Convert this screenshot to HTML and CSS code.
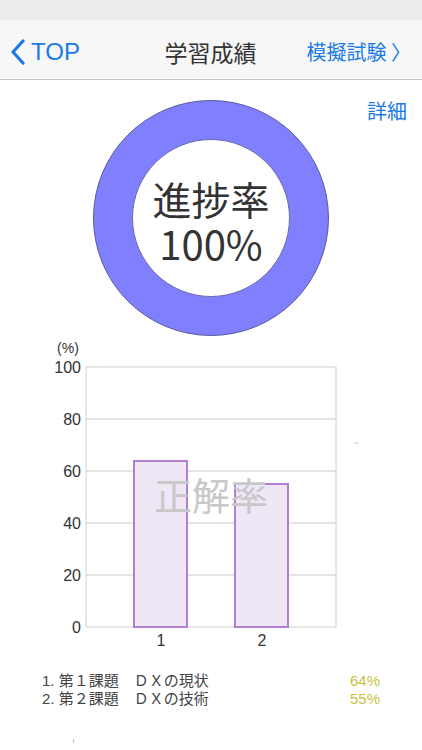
FILE: index.html
```html
<!DOCTYPE html>
<html lang="ja">
<head>
    <meta charset="UTF-8">
    <meta name="viewport" content="width=device-width, initial-scale=1.0">
    <title>学習成績</title>
    <link rel="stylesheet" href="styles.css">
</head>
<body>
    <div class="status-bar"></div>
    <header class="navbar">
        <a class="nav-back">
            <svg class="chevron" width="16" height="26" viewBox="0 0 16 26">
                <path d="M13 2 L3 13 L13 24" fill="none" stroke="currentColor" stroke-width="3.2" stroke-linecap="round" stroke-linejoin="round"/>
            </svg>
            <span>TOP</span>
        </a>
        <h1 class="nav-title">学習成績</h1>
        <a class="nav-next">模擬試験 〉</a>
    </header>

    <section class="progress">
        <div class="donut">
            <div class="donut-hole">
                <div class="donut-label">進捗率</div>
                <div class="donut-value">100%</div>
            </div>
        </div>
        <a class="detail-link">詳細</a>
    </section>

    <section class="chart">
        <svg width="422" height="318" viewBox="0 0 422 318">
            <text class="axis-unit" x="68" y="14" text-anchor="middle">(%)</text>
            <rect x="86" y="28" width="250" height="260" fill="#fff" stroke="#cfcfcf" stroke-width="1"/>
            <g stroke="#c9c9c9" stroke-width="1">
                <line x1="86" y1="80" x2="336" y2="80"/>
                <line x1="86" y1="132" x2="336" y2="132"/>
                <line x1="86" y1="184" x2="336" y2="184"/>
                <line x1="86" y1="236" x2="336" y2="236"/>
            </g>
            <g class="axis-label" text-anchor="end">
                <text x="81" y="34">100</text>
                <text x="81" y="86">80</text>
                <text x="81" y="138">60</text>
                <text x="81" y="190">40</text>
                <text x="81" y="242">20</text>
                <text x="81" y="294">0</text>
            </g>
            <!-- bars: 64%, 55% -->
            <rect x="134" y="122" width="53" height="166" fill="#efe6f6" stroke="#b07fd2" stroke-width="2"/>
            <rect x="235" y="145" width="53" height="143" fill="#efe6f6" stroke="#b07fd2" stroke-width="2"/>
            <text class="watermark" x="211" y="171" text-anchor="middle">正解率</text>
            <g class="axis-label" text-anchor="middle">
                <text x="161" y="307">1</text>
                <text x="262" y="307">2</text>
            </g>
            <line x1="355" y1="104" x2="358" y2="104" stroke="#bbb" stroke-width="1"/>
        </svg>
    </section>

    <ul class="results">
        <li><span>1. 第１課題　ＤＸの現状</span><span class="rate">64%</span></li>
        <li><span>2. 第２課題　ＤＸの技術</span><span class="rate">55%</span></li>
    </ul>
    <div class="tick"></div>
</body>
</html>
```

FILE: styles.css
```css
body {
    margin: 0;
    width: 422px;
    height: 750px;
    overflow: hidden;
    background-color: #ffffff;
    font-family: "Liberation Sans", "Noto Sans CJK JP", sans-serif;
    color: #333333;
}
a {
    color: #1a7ae6;
    text-decoration: none;
}
.status-bar {
    height: 20px;
    background-color: #ececec;
}
.navbar {
    height: 60px;
    background-color: #f7f7f7;
    border-bottom: 1px solid #c4c4c4;
    display: grid;
    grid-template-columns: 1fr auto 1fr;
    align-items: center;
    box-sizing: border-box;
    padding: 4px 11px 0 10px;
}
.nav-back {
    display: flex;
    align-items: center;
    gap: 5px;
    font-size: 24px;
    justify-self: start;
}
.chevron {
    display: block;
    color: #1a7ae6;
}
.nav-title {
    margin: 0;
    font-size: 23px;
    font-weight: normal;
    font-family: "Noto Sans CJK JP", sans-serif;
    color: #333333;
}
.nav-next {
    justify-self: end;
    font-size: 20px;
    font-family: "Noto Sans CJK JP", sans-serif;
}
.progress {
    display: grid;
    grid-template-columns: 93px 236px 1fr;
    padding-top: 20px;
}
.donut {
    grid-column: 2;
    width: 236px;
    height: 236px;
    box-sizing: border-box;
    border-radius: 50%;
    background-color: #8080fe;
    border: 1px solid #5a5aa0;
    display: flex;
    align-items: center;
    justify-content: center;
}
.donut-hole {
    width: 158px;
    height: 158px;
    box-sizing: border-box;
    border-radius: 50%;
    background-color: #ffffff;
    border: 1px solid #6a6ab0;
    display: flex;
    flex-direction: column;
    align-items: center;
    justify-content: center;
    font-family: "Noto Sans CJK JP", sans-serif;
    color: #333333;
    padding-top: 6px;
}
.donut-label {
    font-size: 39px;
    line-height: 44px;
}
.donut-value {
    font-size: 40px;
    line-height: 46px;
}
.detail-link {
    grid-column: 3;
    justify-self: end;
    align-self: start;
    margin-right: 15px;
    font-size: 20px;
    font-family: "Noto Sans CJK JP", sans-serif;
    line-height: 22px;
}
.chart {
    margin-top: 3px;
}
.chart svg {
    display: block;
}
.axis-unit {
    font-size: 14px;
    fill: #333333;
}
.axis-label text {
    font-size: 16px;
    fill: #333333;
}
.watermark {
    font-size: 38px;
    font-family: "Noto Sans CJK JP", sans-serif;
    fill: #c8c8c8;
}
.results {
    list-style: none;
    margin: 15px 0 0 0;
    padding: 0 42px 0 42px;
    font-size: 15px;
    line-height: 18px;
    font-family: "Liberation Sans", "Noto Sans CJK JP", sans-serif;
    color: #444444;
}
.results li {
    display: flex;
    justify-content: space-between;
}
.rate {
    color: #c9c33c;
}
.tick {
    width: 1px;
    height: 4px;
    margin: 31px 0 0 73px;
    background-color: #bbbbbb;
}
```
